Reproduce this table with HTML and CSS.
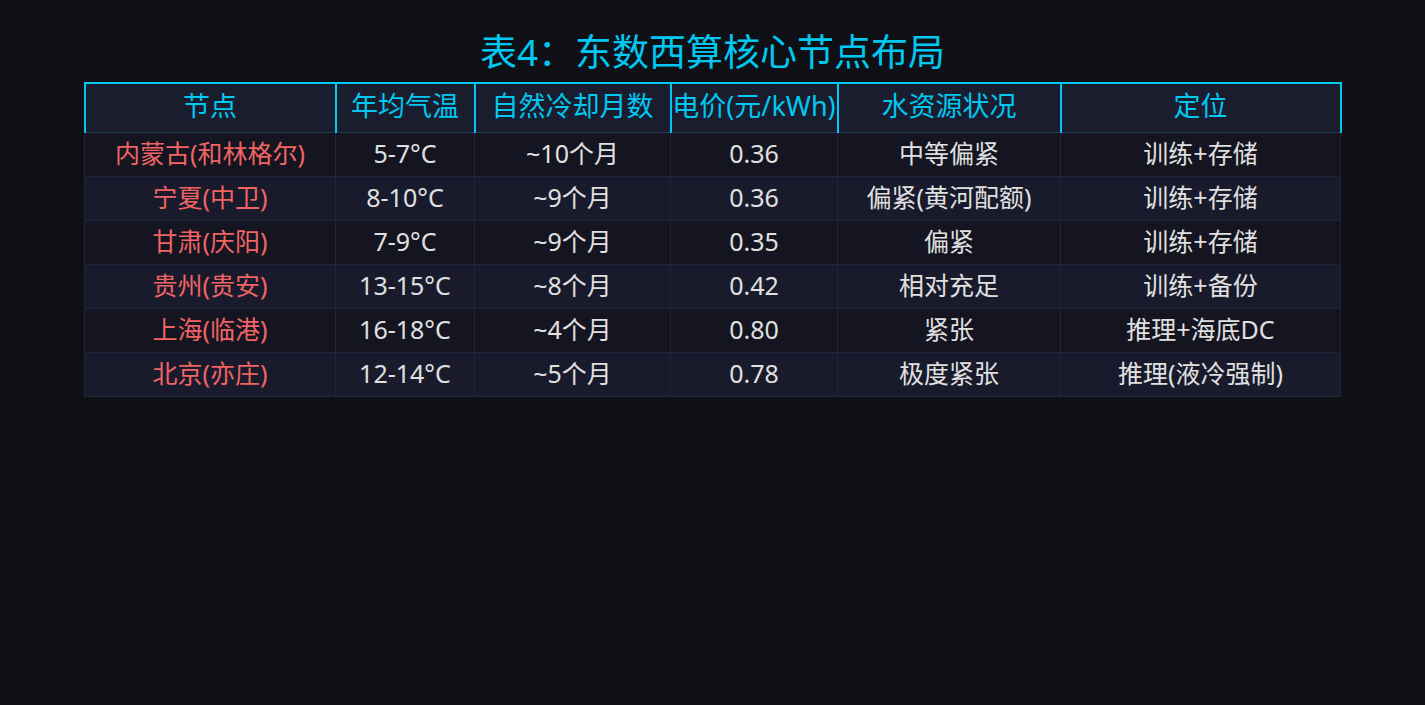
FILE: index.html
```html
<!DOCTYPE html>
<html lang="zh-CN">
<head>
<meta charset="utf-8">
<title>表4：东数西算核心节点布局</title>
<link rel="stylesheet" href="styles.css">
</head>
<body>
<div class="page">
  <h1 class="title">表4：东数西算核心节点布局</h1>
  <table class="grid">
    <colgroup>
      <col class="c1"><col class="c2"><col class="c3"><col class="c4"><col class="c5"><col class="c6">
    </colgroup>
    <thead>
      <tr>
        <th>节点</th><th>年均气温</th><th>自然冷却月数</th><th>电价(元/kWh)</th><th>水资源状况</th><th>定位</th>
      </tr>
    </thead>
    <tbody>
      <tr class="odd"><td class="node">内蒙古(和林格尔)</td><td>5-7°C</td><td>~10个月</td><td>0.36</td><td>中等偏紧</td><td>训练+存储</td></tr>
      <tr class="even"><td class="node">宁夏(中卫)</td><td>8-10°C</td><td>~9个月</td><td>0.36</td><td>偏紧(黄河配额)</td><td>训练+存储</td></tr>
      <tr class="odd"><td class="node">甘肃(庆阳)</td><td>7-9°C</td><td>~9个月</td><td>0.35</td><td>偏紧</td><td>训练+存储</td></tr>
      <tr class="even"><td class="node">贵州(贵安)</td><td>13-15°C</td><td>~8个月</td><td>0.42</td><td>相对充足</td><td>训练+备份</td></tr>
      <tr class="odd"><td class="node">上海(临港)</td><td>16-18°C</td><td>~4个月</td><td>0.80</td><td>紧张</td><td>推理+海底DC</td></tr>
      <tr class="even"><td class="node">北京(亦庄)</td><td>12-14°C</td><td>~5个月</td><td>0.78</td><td>极度紧张</td><td>推理(液冷强制)</td></tr>
    </tbody>
  </table>
</div>
</body>
</html>
```
FILE: styles.css
```css
html, body {
  margin: 0;
  padding: 0;
  background: #0f1015;
}
body {
  font-family: "Noto Sans", "Noto Sans CJK SC", sans-serif;
  color: #e0e0e0;
}
.page {
  padding-top: 29px;
  display: flex;
  flex-direction: column;
  align-items: center;
}
.title {
  margin: 0 0 8px 0;
  font-size: 37px;
  line-height: 45px;
  font-weight: normal;
  color: #00c8f0;
}
.grid {
  border-collapse: collapse;
  table-layout: fixed;
  width: 1256px;
  font-size: 25px;
}
.c1 { width: 251px; }
.c2 { width: 139px; }
.c3 { width: 196px; }
.c4 { width: 167px; }
.c5 { width: 223px; }
.c6 { width: 280px; }
.grid th {
  height: 44px;
  padding: 0 0 4px 0;
  font-size: 27px;
  font-weight: normal;
  color: #00c8f0;
  background: #1a1d2e;
  border: 2px solid #00c8f0;
  border-bottom: 1px solid #1c3a4c;
  line-height: 1.2;
  white-space: nowrap;
}
.grid td {
  height: 40px;
  padding: 0 0 3px 0;
  text-align: center;
  line-height: 1.2;
  border: 1px solid #22253a;
  white-space: nowrap;
}
.grid tr.odd td { background: #141520; }
.grid tr.even td { background: #191b2c; }
.grid td.node { color: #f06464; }
```
